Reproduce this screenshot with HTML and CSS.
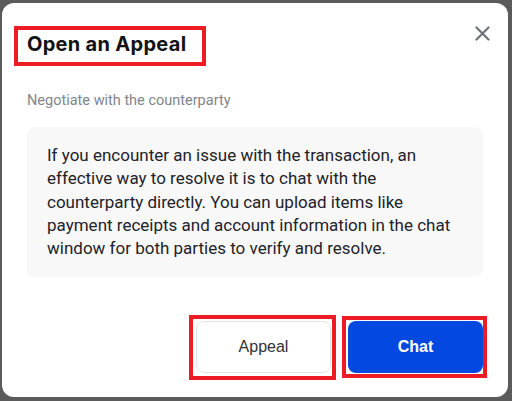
FILE: index.html
```html
<!DOCTYPE html>
<html>

<head>
    <title>Open an Appeal</title>
    <link rel="stylesheet" href="styles.css">
</head>

<body>
    <div class="dialog">
        <div class="dialog-header">
            <div class="mark title-mark">
                <h2>Open an Appeal</h2>
            </div>
            <button class="close" aria-label="Close">
                <svg width="15" height="15" viewBox="0 0 15 15">
                    <path d="M1.5 1.5 L13.5 13.5 M13.5 1.5 L1.5 13.5" stroke="#6f7378" stroke-width="2.2" stroke-linecap="round" fill="none"/>
                </svg>
            </button>
        </div>

        <p class="subtitle">Negotiate with the counterparty</p>

        <div class="info-box">
            If you encounter an issue with the transaction, an effective way to resolve it is to chat with the
            counterparty directly. You can upload items like payment receipts and account information in the chat
            window for both parties to verify and resolve.
        </div>

        <div class="btn-group">
            <div class="mark appeal-mark">
                <button class="appeal">Appeal</button>
            </div>
            <div class="mark chat-mark">
                <button class="chat">Chat</button>
            </div>
        </div>
    </div>
</body>

</html>
```

FILE: styles.css
```css
* {
    box-sizing: border-box;
}

html, body {
    margin: 0;
    height: 100%;
}

body {
    background-color: #5b5b5b;
    padding: 3px 4px 4px 2px;
    font-family: Roboto, "Liberation Sans", sans-serif;
}

.dialog {
    height: 394px;
    background-color: #fff;
    border-radius: 12px;
    padding: 23px 25px 17px 25px;
}

/* red annotation frames */
.mark {
    border: 4px solid #ed1c24;
}

.dialog-header {
    display: flex;
    justify-content: space-between;
    align-items: flex-start;
}

.title-mark {
    margin-left: -13px;
    width: 192px;
    height: 40px;
    padding: 0 0 3px 9px;
}

.title-mark h2 {
    margin: 0;
    font-family: Inter, "Noto Sans", sans-serif;
    font-weight: 700;
    font-size: 20px;
    line-height: 29px;
    color: #121214;
    letter-spacing: 0.3px;
}

.close {
    margin-right: -7px;
    padding: 0;
    border: none;
    background: none;
    width: 15px;
    height: 15px;
    cursor: pointer;
}

.close svg {
    display: block;
}

.subtitle {
    margin: 26px 0 0;
    font-size: 14.5px;
    line-height: 18px;
    color: #81858c;
}

.info-box {
    margin-top: 17px;
    background-color: #f8f8f8;
    border-radius: 8px;
    padding: 17px 20px;
    height: 150px;
    font-size: 17px;
    line-height: 23.3px;
    color: #1e2329;
}

.btn-group {
    margin-top: 38px;
    display: flex;
    justify-content: flex-end;
    align-items: flex-start;
    gap: 6px;
}

.btn-group button {
    display: block;
    width: 135px;
    height: 52px;
    border-radius: 8px;
    font-family: "Liberation Sans", Arial, sans-serif;
    font-size: 16px;
    cursor: pointer;
}

.appeal-mark {
    padding: 2px 1px 3px 3px;
}

.chat-mark {
    margin-top: 1px;
    margin-right: -4px;
    padding: 1px 0 1px 2px;
}

.btn-group button.appeal {
    background-color: #fff;
    border: 1px solid #e1e3e8;
    color: #303236;
}

.btn-group button.chat {
    background-color: #0348e0;
    border: none;
    color: #fff;
    font-weight: 700;
}
```
